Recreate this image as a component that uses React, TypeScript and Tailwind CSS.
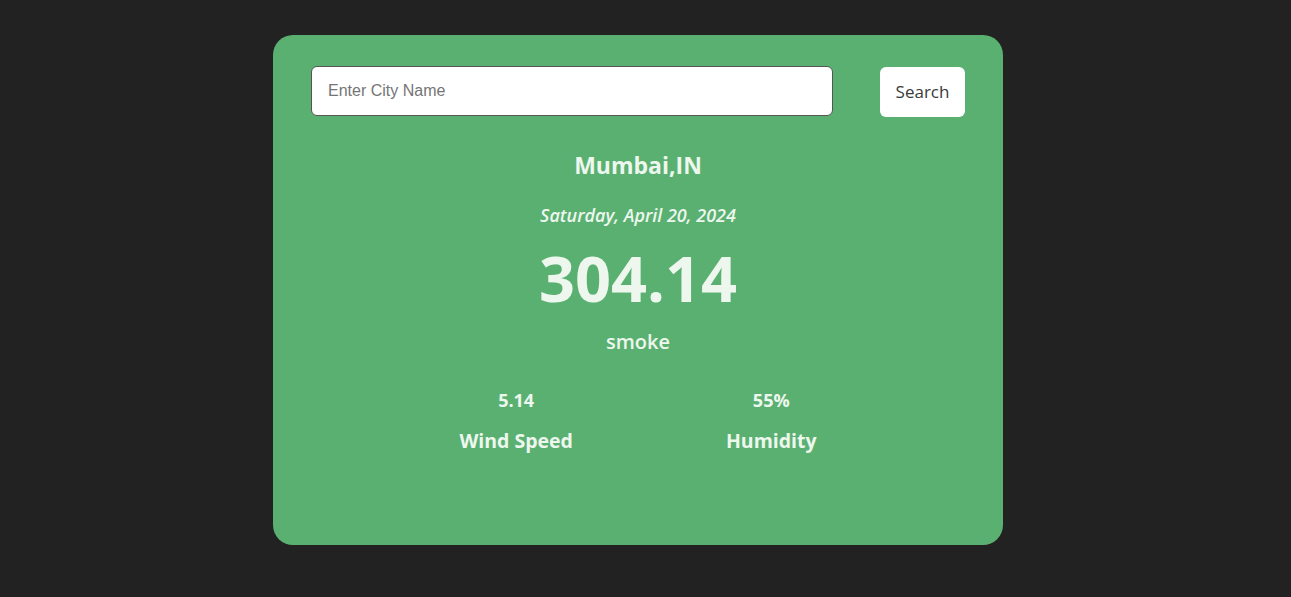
import React from "react";

export default function App() {
  return (
    <div className="min-h-screen w-full bg-[#222222] flex justify-center pt-[35px] pr-[15px]" style={{ fontFamily: '"Open Sans", "Noto Sans", sans-serif' }}>
      <div className="w-[730px] h-[510px] bg-[#5ab071] rounded-[20px] px-[38px] pt-[30px] flex flex-col items-center text-[#edf7ee]">
        <div className="w-full flex justify-between items-center">
          <input
            className="w-[522px] h-[50px] bg-white border border-[#555] rounded-[6px] px-4 text-[16px] text-[#333] placeholder:text-[#757575] outline-none"
            style={{ fontFamily: '"Liberation Sans", Arial, sans-serif' }}
            placeholder="Enter City Name"
          />
          <button className="w-[85px] h-[50px] bg-white rounded-[6px] text-[17px] font-medium text-[#3a3a3a] mt-[2px]">Search</button>
        </div>
        <div className="mt-[32px] text-[23px] font-bold leading-[32px]">Mumbai,IN</div>
        <div className="mt-[22px] text-[18px] italic font-semibold leading-[24px]">Saturday, April 20, 2024</div>
        <div className="mt-[9px] text-[63px] font-bold leading-[84px]">304.14</div>
        <div className="mt-[7px] text-[20px] font-semibold leading-[30px]">smoke</div>
        <div className="mt-[30px] flex justify-center gap-[153px]">
          <div className="flex flex-col items-center">
            <div className="text-[18px] font-bold leading-[26px]">5.14</div>
            <div className="mt-[14px] text-[19.5px] font-bold leading-[28px]">Wind Speed</div>
          </div>
          <div className="flex flex-col items-center">
            <div className="text-[18px] font-bold leading-[26px]">55%</div>
            <div className="mt-[14px] text-[19.5px] font-bold leading-[28px]">Humidity</div>
          </div>
        </div>
      </div>
    </div>
  );
}
